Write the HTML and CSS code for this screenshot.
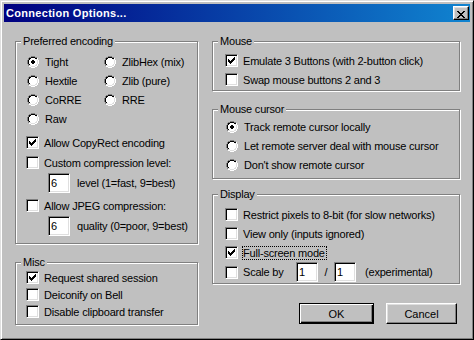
FILE: index.html
```html
<!DOCTYPE html>
<html lang="en">
<head>
<meta charset="utf-8">
<title>Connection Options...</title>
<link rel="stylesheet" href="styles.css">
</head>
<body>
<svg class="defs" aria-hidden="true">
  <symbol id="radio" viewBox="0 0 12 12">
    <path fill="#808080" d="M4 0h4v1h-4zM2 1h2v1h-2zM8 1h2v1h-2zM1 2h1v2h-1zM0 4h1v4h-1zM1 8h1v2h-1z"/>
    <path fill="#ffffff" d="M10 2h1v2h-1zM11 4h1v4h-1zM10 8h1v2h-1zM2 10h2v1h-2zM8 10h2v1h-2zM4 11h4v1h-4z"/>
    <path fill="#000000" d="M4 1h4v1h-4zM2 2h2v1h-2zM8 2h2v1h-2zM2 3h1v1h-1zM1 4h1v4h-1zM2 8h1v1h-1z"/>
    <path fill="#dfdfdf" d="M9 3h1v1h-1zM10 4h1v4h-1zM9 8h1v1h-1zM2 9h2v1h-2zM8 9h2v1h-2zM4 10h4v1h-4z"/>
    <path fill="#ffffff" d="M4 2h4v1h-4zM3 3h6v1h-6zM2 4h8v4h-8zM3 8h6v1h-6zM4 9h4v1h-4z"/>
  </symbol>
  <symbol id="radio-on" viewBox="0 0 12 12">
    <use href="#radio"/>
    <path fill="#000000" d="M5 4h2v1h-2zM4 5h4v2h-4zM5 7h2v1h-2z"/>
  </symbol>
  <symbol id="check" viewBox="0 0 7 7">
    <path fill="#000000" d="M0 2h1v3h-1zM1 3h1v3h-1zM2 4h1v3h-1zM3 3h1v3h-1zM4 2h1v3h-1zM5 1h1v3h-1zM6 0h1v3h-1z"/>
  </symbol>
</svg>

<div class="window">
  <div class="titlebar">
    <span class="title">Connection Options...</span>
    <button class="close" type="button" aria-label="Close">
      <svg width="8" height="7" viewBox="0 0 8 7" shape-rendering="crispEdges"><path fill="#000" d="M0 0h2v1h-2zM6 0h2v1h-2zM1 1h2v1h-2zM5 1h2v1h-2zM2 2h4v1h-4zM3 3h2v1h-2zM2 4h4v1h-4zM1 5h2v1h-2zM5 5h2v1h-2zM0 6h2v1h-2zM6 6h2v1h-2z"/></svg>
    </button>
  </div>

  <div class="content">
    <div class="col col-left">
      <div class="group g-enc">
        <div class="legend">Preferred encoding</div>
        <div class="radios">
          <div class="opt"><svg class="radio" viewBox="0 0 12 12" shape-rendering="crispEdges"><use href="#radio-on"/></svg><span>Tight</span></div>
          <div class="opt"><svg class="radio" viewBox="0 0 12 12" shape-rendering="crispEdges"><use href="#radio"/></svg><span>ZlibHex (mix)</span></div>
          <div class="opt"><svg class="radio" viewBox="0 0 12 12" shape-rendering="crispEdges"><use href="#radio"/></svg><span>Hextile</span></div>
          <div class="opt"><svg class="radio" viewBox="0 0 12 12" shape-rendering="crispEdges"><use href="#radio"/></svg><span>Zlib (pure)</span></div>
          <div class="opt"><svg class="radio" viewBox="0 0 12 12" shape-rendering="crispEdges"><use href="#radio"/></svg><span>CoRRE</span></div>
          <div class="opt"><svg class="radio" viewBox="0 0 12 12" shape-rendering="crispEdges"><use href="#radio"/></svg><span>RRE</span></div>
          <div class="opt"><svg class="radio" viewBox="0 0 12 12" shape-rendering="crispEdges"><use href="#radio"/></svg><span>Raw</span></div>
        </div>
        <div class="opt chk r-copyrect"><span class="cb"><svg class="tick" viewBox="0 0 7 7" shape-rendering="crispEdges"><use href="#check"/></svg></span><span>Allow CopyRect encoding</span></div>
        <div class="opt chk r-custom"><span class="cb"></span><span>Custom compression level:</span></div>
        <div class="editrow r-level"><span class="edit">6</span><span class="hint">level (1=fast, 9=best)</span></div>
        <div class="opt chk r-jpeg"><span class="cb"></span><span>Allow JPEG compression:</span></div>
        <div class="editrow r-quality"><span class="edit">6</span><span class="hint">quality (0=poor, 9=best)</span></div>
      </div>

      <div class="group g-misc">
        <div class="legend">Misc</div>
        <div class="opt chk short"><span class="cb"><svg class="tick" viewBox="0 0 7 7" shape-rendering="crispEdges"><use href="#check"/></svg></span><span>Request shared session</span></div>
        <div class="opt chk short"><span class="cb"></span><span>Deiconify on Bell</span></div>
        <div class="opt chk short"><span class="cb"></span><span>Disable clipboard transfer</span></div>
      </div>
    </div>

    <div class="col col-right">
      <div class="group g-mouse">
        <div class="legend">Mouse</div>
        <div class="opt chk"><span class="cb"><svg class="tick" viewBox="0 0 7 7" shape-rendering="crispEdges"><use href="#check"/></svg></span><span>Emulate 3 Buttons (with 2-button click)</span></div>
        <div class="opt chk"><span class="cb"></span><span>Swap mouse buttons 2 and 3</span></div>
      </div>

      <div class="group g-cursor">
        <div class="legend">Mouse cursor</div>
        <div class="opt"><svg class="radio" viewBox="0 0 12 12" shape-rendering="crispEdges"><use href="#radio-on"/></svg><span>Track remote cursor locally</span></div>
        <div class="opt"><svg class="radio" viewBox="0 0 12 12" shape-rendering="crispEdges"><use href="#radio"/></svg><span>Let remote server deal with mouse cursor</span></div>
        <div class="opt"><svg class="radio" viewBox="0 0 12 12" shape-rendering="crispEdges"><use href="#radio"/></svg><span>Don't show remote cursor</span></div>
      </div>

      <div class="group g-display">
        <div class="legend">Display</div>
        <div class="opt chk"><span class="cb"></span><span>Restrict pixels to 8-bit (for slow networks)</span></div>
        <div class="opt chk"><span class="cb"></span><span>View only (inputs ignored)</span></div>
        <div class="opt chk"><span class="cb"><svg class="tick" viewBox="0 0 7 7" shape-rendering="crispEdges"><use href="#check"/></svg></span><span class="focus">Full-screen mode</span></div>
        <div class="opt chk scalerow"><span class="cb"></span><span class="scale-label">Scale by</span><span class="edit">1</span><span class="slash">/</span><span class="edit">1</span><span class="exp">(experimental)</span></div>
      </div>

      <div class="buttons">
        <button class="btn default" type="button">OK</button>
        <button class="btn cancel" type="button">Cancel</button>
      </div>
    </div>
  </div>
</div>
</body>
</html>
```

FILE: styles.css
```css
* { box-sizing: border-box; }

html, body {
  margin: 0;
  padding: 0;
}

body {
  width: 474px;
  height: 340px;
  overflow: hidden;
  background: #c0c0c0;
  color: #000;
  font-family: "Liberation Sans", Arial, sans-serif;
  font-size: 11px;
  letter-spacing: -0.2px;
}

.defs {
  position: absolute;
  width: 0;
  height: 0;
  overflow: hidden;
}

.window {
  width: 474px;
  height: 340px;
  display: flex;
  flex-direction: column;
  background: #c0c0c0;
  border: 1px solid;
  border-color: #dfdfdf #000 #000 #dfdfdf;
  box-shadow: inset 1px 1px 0 #fff, inset -1px -1px 0 #808080;
  padding: 3px;
}

.titlebar {
  height: 18px;
  flex: none;
  display: flex;
  align-items: center;
  justify-content: space-between;
  padding: 0 1px 0 2px;
  background: linear-gradient(to right, #000080, #1084d0);
  color: #fff;
  font-weight: bold;
  line-height: 18px;
  letter-spacing: 0.3px;
}

.close {
  width: 16px;
  height: 14px;
  padding: 0;
  margin: 0;
  background: #c0c0c0;
  border: 1px solid;
  border-color: #fff #000 #000 #fff;
  box-shadow: inset -1px -1px 0 #808080, inset 1px 1px 0 #dfdfdf;
}

.close svg {
  display: block;
  margin: 2px 0 0 3px;
}

.content {
  flex: 1;
  display: flex;
  gap: 14px;
  padding: 19px 0 0 11px;
}

.col {
  display: flex;
  flex-direction: column;
}

.col-left { width: 183px; }
.col-right { width: 248px; }

.group {
  border: 1px solid #808080;
  box-shadow: 1px 1px 0 #fff, inset 1px 1px 0 #fff;
}

.legend {
  width: fit-content;
  margin: -7px 0 0 5px;
  padding: 0 2px;
  height: 13px;
  line-height: 13px;
  background: #c0c0c0;
  white-space: nowrap;
}

.opt {
  display: flex;
  align-items: center;
  height: 19px;
  white-space: nowrap;
}

.radio {
  width: 12px;
  height: 12px;
  flex: none;
  margin-right: 6px;
}

.cb {
  width: 13px;
  height: 13px;
  flex: none;
  margin-right: 5px;
  background: #fff;
  border: 1px solid;
  border-color: #808080 #fff #fff #808080;
  box-shadow: inset 1px 1px 0 #000, inset -1px -1px 0 #dfdfdf;
  padding: 2px;
}

.tick {
  display: block;
  width: 7px;
  height: 7px;
}

.edit {
  display: block;
  flex: none;
  width: 22px;
  height: 20px;
  line-height: 18px;
  padding-left: 2px;
  background: #fff;
  border: 1px solid;
  border-color: #808080 #fff #fff #808080;
  box-shadow: inset 1px 1px 0 #000, inset -1px -1px 0 #dfdfdf;
}

/* Preferred encoding */
.g-enc {
  height: 203px;
  padding: 0 0 8px 0;
}

.g-enc .radios {
  display: grid;
  grid-template-columns: 77px 1fr;
  padding: 4px 0 0 11px;
}

.g-enc .chk { padding-left: 10px; }

.r-copyrect { margin-top: 5px; }
.r-custom { margin-top: 1px; }
.r-jpeg { margin-top: 3px; }

.editrow {
  display: flex;
  align-items: center;
  height: 20px;
  padding-left: 32px;
  white-space: nowrap;
}

.r-level { margin-top: 1px; }
.r-quality { margin-top: 1px; }

.editrow .hint { margin-left: 7px; }

/* Misc */
.g-misc {
  margin-top: 18px;
  height: 63px;
}

.g-misc .chk {
  height: 17px;
  padding-left: 10px;
}

/* Right column */
.col-right .opt { padding-left: 12px; }

.g-mouse {
  height: 50px;
}
.g-mouse .legend { margin-bottom: 3px; }

.g-cursor {
  margin-top: 18px;
  height: 70px;
}
.g-cursor .legend { margin-bottom: 1px; }
.g-cursor .radio { margin-left: 1px; }

.g-display {
  margin-top: 15px;
  height: 90px;
}
.g-display .legend { margin-bottom: 4px; }

.focus {
  display: inline-block;
  height: 14px;
  line-height: 12px;
  margin-left: -1px;
  padding-right: 1px;
  border: 1px dotted #000;
}

.scalerow { height: 20px; }
.scale-label { width: 53px; flex: none; }
.slash { width: 16px; flex: none; text-align: center; }
.exp { margin-left: 9px; }

/* Buttons */
.buttons {
  display: flex;
  justify-content: flex-end;
  gap: 12px;
  margin-top: 19px;
  padding-right: 3px;
}

.btn {
  height: 21px;
  padding: 0;
  margin: 0;
  font: inherit;
  color: #000;
  background: #c0c0c0;
  border: 1px solid;
  border-color: #fff #000 #000 #fff;
  box-shadow: inset -1px -1px 0 #808080, inset 1px 1px 0 #dfdfdf;
}

.btn.default {
  width: 75px;
  border-color: #000;
  box-shadow: inset 1px 1px 0 #fff, inset -1px -1px 0 #000, inset -2px -2px 0 #808080;
}

.btn.cancel { width: 71px; }
```
